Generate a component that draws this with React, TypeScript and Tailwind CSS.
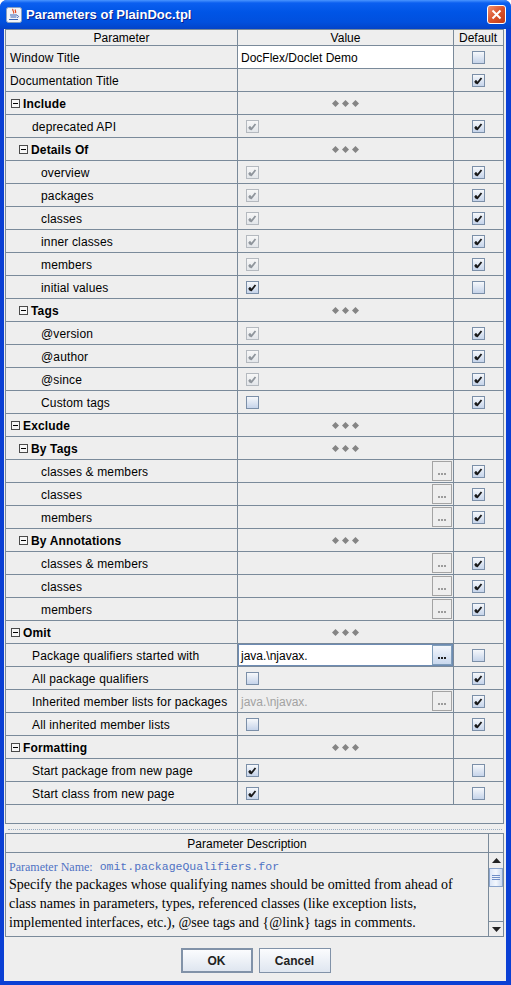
import React from "react";

type Val = "text" | "empty" | "dia" | "dis" | "on" | "off" | "btn" | "focus" | "graybtn";
type Row = { label: string; pad: string; group?: boolean; val: Val; def?: boolean; text?: string };

const P0 = "pl-[4px]";
const G0 = "pl-[5px]";
const P1 = "pl-[26px]";
const G1 = "pl-[13px]";
const P2 = "pl-[35px]";

const rows: Row[] = [
  { label: "Window Title", pad: P0, val: "text", text: "DocFlex/Doclet Demo", def: false },
  { label: "Documentation Title", pad: P0, val: "empty", def: true },
  { label: "Include", pad: G0, group: true, val: "dia" },
  { label: "deprecated API", pad: P1, val: "dis", def: true },
  { label: "Details Of", pad: G1, group: true, val: "dia" },
  { label: "overview", pad: P2, val: "dis", def: true },
  { label: "packages", pad: P2, val: "dis", def: true },
  { label: "classes", pad: P2, val: "dis", def: true },
  { label: "inner classes", pad: P2, val: "dis", def: true },
  { label: "members", pad: P2, val: "dis", def: true },
  { label: "initial values", pad: P2, val: "on", def: false },
  { label: "Tags", pad: G1, group: true, val: "dia" },
  { label: "@version", pad: P2, val: "dis", def: true },
  { label: "@author", pad: P2, val: "dis", def: true },
  { label: "@since", pad: P2, val: "dis", def: true },
  { label: "Custom tags", pad: P2, val: "off", def: true },
  { label: "Exclude", pad: G0, group: true, val: "dia" },
  { label: "By Tags", pad: G1, group: true, val: "dia" },
  { label: "classes & members", pad: P2, val: "btn", def: true },
  { label: "classes", pad: P2, val: "btn", def: true },
  { label: "members", pad: P2, val: "btn", def: true },
  { label: "By Annotations", pad: G1, group: true, val: "dia" },
  { label: "classes & members", pad: P2, val: "btn", def: true },
  { label: "classes", pad: P2, val: "btn", def: true },
  { label: "members", pad: P2, val: "btn", def: true },
  { label: "Omit", pad: G0, group: true, val: "dia" },
  { label: "Package qualifiers started with", pad: P1, val: "focus", text: "java.\\njavax.", def: false },
  { label: "All package qualifiers", pad: P1, val: "off", def: true },
  { label: "Inherited member lists for packages", pad: P1, val: "graybtn", text: "java.\\njavax.", def: true },
  { label: "All inherited member lists", pad: P1, val: "off", def: true },
  { label: "Formatting", pad: G0, group: true, val: "dia" },
  { label: "Start package from new page", pad: P1, val: "on", def: false },
  { label: "Start class from new page", pad: P1, val: "on", def: false },
];

const Check = ({ checked, disabled }: { checked: boolean; disabled?: boolean }) => (
  <div
    className={
      disabled
        ? "w-[13px] h-[13px] border border-[#b4b9bf] bg-[linear-gradient(to_bottom,#f7f7f7,#e3e6ea)] flex items-center justify-center"
        : "w-[13px] h-[13px] border border-[#7b8fa8] bg-[linear-gradient(to_bottom,#f6f8fb,#c6d4ea)] flex items-center justify-center"
    }
  >
    {checked && (
      <svg width="11" height="11" viewBox="0 0 11 11">
        <path
          d="M2.5 5.5 L4.5 8 L8.5 3"
          fill="none"
          stroke={disabled ? "#8f959c" : "#1a1a1a"}
          strokeWidth="1.8"
        />
        <path d="M2 6 L4 8.5" stroke={disabled ? "#8f959c" : "#1a1a1a"} strokeWidth="2.2" />
      </svg>
    )}
  </div>
);

const Dots = ({ active }: { active?: boolean }) => (
  <div
    className={
      active
        ? "w-[20px] h-[20px] border border-[#7f9db9] bg-[linear-gradient(to_bottom,#f4f7fc,#c9d8ee)] flex items-end justify-center gap-[1px] pb-[5px]"
        : "w-[20px] h-[20px] border border-[#a3a3a3] flex items-end justify-center gap-[1px] pb-[5px]"
    }
  >
    <span className={active ? "w-[2px] h-[2px] bg-[#222]" : "w-[2px] h-[2px] bg-[#9c9c9c]"} />
    <span className={active ? "w-[2px] h-[2px] bg-[#222]" : "w-[2px] h-[2px] bg-[#9c9c9c]"} />
    <span className={active ? "w-[2px] h-[2px] bg-[#222]" : "w-[2px] h-[2px] bg-[#9c9c9c]"} />
  </div>
);

const Diamonds = () => (
  <svg width="27" height="7" viewBox="0 0 27 7">
    <polygon points="3.5,0 7,3.5 3.5,7 0,3.5" fill="#858585" />
    <polygon points="13.5,0 17,3.5 13.5,7 10,3.5" fill="#858585" />
    <polygon points="23.5,0 27,3.5 23.5,7 20,3.5" fill="#858585" />
  </svg>
);

const Minus = () => (
  <svg width="9" height="9" viewBox="0 0 9 9" className="shrink-0">
    <rect x="0.5" y="0.5" width="8" height="8" fill="#f6f6f6" stroke="#4a4a4a" />
    <line x1="2" y1="4.5" x2="7" y2="4.5" stroke="#000" />
  </svg>
);

function ValueCell({ r }: { r: Row }) {
  switch (r.val) {
    case "text":
      return <div className="w-[215px] h-full bg-white flex items-center pl-[3px] pt-[1px]">{r.text}</div>;
    case "dia":
      return (
        <div className="w-[215px] h-full flex items-center justify-center pr-[1px]">
          <Diamonds />
        </div>
      );
    case "dis":
    case "on":
    case "off":
      return (
        <div className="w-[215px] h-full flex items-center pl-[8px]">
          <Check checked={r.val !== "off"} disabled={r.val === "dis"} />
        </div>
      );
    case "btn":
      return (
        <div className="w-[215px] h-full flex items-center justify-end pr-[1px]">
          <Dots />
        </div>
      );
    case "focus":
      return (
        <div className="w-[215px] h-full bg-white border border-[#6d8bb3] flex items-center justify-between pl-[2px]">
          <span className="pt-[1px]">{r.text}</span>
          <Dots active />
        </div>
      );
    case "graybtn":
      return (
        <div className="w-[215px] h-full flex items-center justify-between pl-[3px] pr-[1px]">
          <span className="text-[#a2a2a2] pt-[1px]">{r.text}</span>
          <Dots />
        </div>
      );
    default:
      return <div className="w-[215px] h-full" />;
  }
}

export default function App() {
  return (
    <div className="w-[511px] h-[985px] bg-[#0a3fd4] rounded-t-[7px] flex flex-col font-['Liberation_Sans',Arial,sans-serif] text-[12px] text-black overflow-hidden">
      {/* title bar */}
      <div className="h-[29px] shrink-0 flex items-center pl-[6px] pr-[5px] bg-[linear-gradient(to_bottom,#4a95ff_0px,#0b5ff0_3px,#0055e6_12px,#0150de_22px,#0443c8_29px)]">
        <svg width="16" height="16" viewBox="0 0 16 16" className="shrink-0">
          <rect x="0.5" y="0.5" width="15" height="15" rx="2" fill="#f2f4f8" stroke="#8aa0c0" />
          <path d="M7 2 C5.5 3.5 9 4.5 7.5 6.5 M9.5 2.5 C8.5 4 10.5 4.5 9.5 6" fill="none" stroke="#e2461d" strokeWidth="1.2" />
          <path d="M4 8 H11 M4.5 10 H10.5 M3 12.5 H12" stroke="#3a64b5" strokeWidth="1.2" />
          <path d="M11 8.5 C13 8.5 13 10.5 11 10.5" fill="none" stroke="#3a64b5" strokeWidth="1" />
        </svg>
        <span className="ml-[4px] text-white font-bold text-[13px] [text-shadow:1px_1px_0_#0a1e8a]">
          Parameters of PlainDoc.tpl
        </span>
        <div className="ml-auto w-[19px] h-[19px] rounded-[3px] border border-white bg-[linear-gradient(135deg,#f09070,#d9532c_50%,#c03a16)] flex items-center justify-center">
          <svg width="11" height="11" viewBox="0 0 11 11">
            <path d="M1.5 1.5 L9.5 9.5 M9.5 1.5 L1.5 9.5" stroke="#fff" strokeWidth="2" />
          </svg>
        </div>
      </div>

      {/* content */}
      <div className="flex-1 ml-[4px] mr-[5px] mb-[4px] bg-[#eeeeee] flex flex-col">
        {/* table */}
        <div className="ml-[1px] w-[499px] h-[795px] border border-[#7a8a9a] flex flex-col">
          <div className="h-[16px] flex border-b border-[#7a8a9a] shrink-0">
            <div className="w-[232px] border-r border-[#7a8a9a] flex items-center justify-center leading-none pt-[1px]">Parameter</div>
            <div className="w-[216px] border-r border-[#7a8a9a] flex items-center justify-center leading-none pt-[1px]">Value</div>
            <div className="w-[48px] flex items-center justify-center leading-none pt-[1px]">Default</div>
          </div>
          {rows.map((r, i) => (
            <div key={i} className="h-[23px] flex border-b border-[#7a8a9a] shrink-0">
              <div className={`w-[232px] border-r border-[#7a8a9a] flex items-center whitespace-nowrap tracking-[0.15px] ${r.pad}`}>
                {r.group ? (
                  <>
                    <Minus />
                    <span className="ml-[3px] font-bold pt-[1px]">{r.label}</span>
                  </>
                ) : (
                  <span className="pt-[1px]">{r.label}</span>
                )}
              </div>
              <div className="w-[216px] border-r border-[#7a8a9a] flex">
                <ValueCell r={r} />
              </div>
              <div className="w-[48px] flex items-center justify-center pl-[1px]">
                {r.def !== undefined && <Check checked={r.def} />}
              </div>
            </div>
          ))}
          <div className="flex-1" />
        </div>

        {/* splitter */}
        <div className="h-[9px] shrink-0 flex items-center px-[4px]">
          <div className="w-full border-t border-dotted border-[#9aaec4] mt-[1px]" />
        </div>

        {/* description */}
        <div className="ml-[1px] w-[499px] h-[104px] border border-[#7a8a9a] flex shrink-0">
          <div className="flex-1 flex flex-col border-r border-[#7a8a9a]">
            <div className="h-[19px] border-b border-[#7a8a9a] flex items-center justify-center leading-none pt-[1px]">
              Parameter Description
            </div>
            <div className="flex-1 pl-[3px] pt-[5px] overflow-hidden">
              <div className="h-[17px] flex items-center whitespace-nowrap text-[#4f72c4]">
                <span className="font-['Liberation_Serif',serif] text-[12px]">Parameter Name:</span>
                <span className="ml-[7px] font-['Liberation_Mono',monospace] text-[11.5px]">omit.packageQualifiers.for</span>
              </div>
              <div className="font-['Liberation_Serif',serif] text-[14px] leading-[19px] whitespace-nowrap">
                <div>Specify the packages whose qualifying names should be omitted from ahead of</div>
                <div>class names in parameters, types, referenced classes (like exception lists,</div>
                <div>implemented interfaces, etc.), @see tags and {"{@link}"} tags in comments.</div>
              </div>
            </div>
          </div>
          <div className="w-[14px] flex flex-col">
            <div className="h-[19px] border-b border-[#7a8a9a]" />
            <div className="h-[15px] flex items-center justify-center">
              <svg width="9" height="5" viewBox="0 0 9 5">
                <polygon points="4.5,0 9,5 0,5" fill="#222" />
              </svg>
            </div>
            <div className="h-[19px] border border-[#8aa4cc] bg-[linear-gradient(to_right,#dbe6f7,#f3f7fd,#c9d8ef)] flex flex-col items-center justify-center gap-[1px]">
              <span className="w-[8px] h-[1px] bg-[#6f8fc8]" />
              <span className="w-[8px] h-[1px] bg-[#6f8fc8]" />
              <span className="w-[8px] h-[1px] bg-[#6f8fc8]" />
            </div>
            <div className="flex-1" />
            <div className="h-[15px] border-t border-[#7a8a9a] flex items-center justify-center">
              <svg width="9" height="5" viewBox="0 0 9 5">
                <polygon points="0,0 9,0 4.5,5" fill="#222" />
              </svg>
            </div>
          </div>
        </div>

        {/* buttons */}
        <div className="flex-1 flex justify-center items-start pt-[11px] gap-[6px] pl-[1px]">
          <button className="w-[72px] h-[25px] border-2 border-[#8192a8] bg-[linear-gradient(to_bottom,#fbfcfe,#dfe6f0)] font-bold text-[12px] text-[#222] leading-none">
            OK
          </button>
          <button className="w-[72px] h-[25px] border border-[#8192a8] bg-[linear-gradient(to_bottom,#fbfcfe,#dfe6f0)] font-bold text-[12px] text-[#222] leading-none">
            Cancel
          </button>
        </div>
      </div>
    </div>
  );
}
